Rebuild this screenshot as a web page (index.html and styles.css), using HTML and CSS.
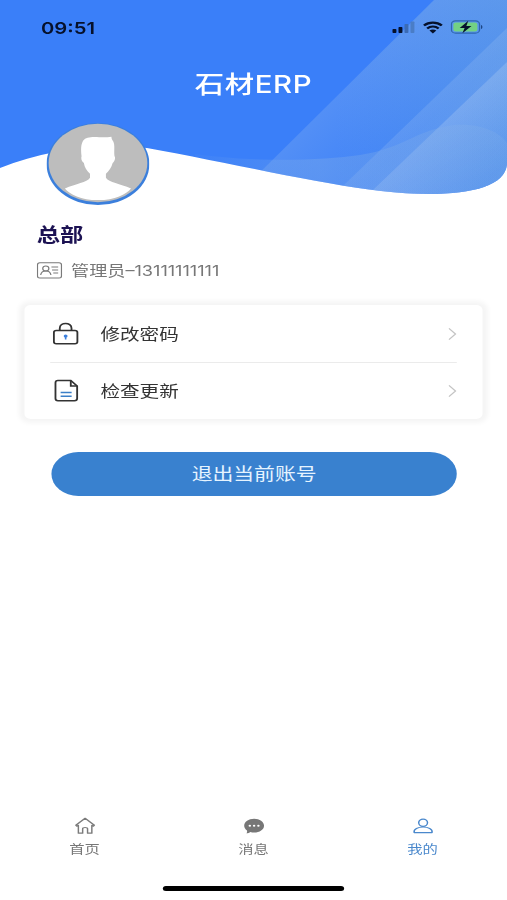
FILE: index.html
```html
<!DOCTYPE html>
<html lang="zh-CN">

<head>
  <meta charset="UTF-8" />
  <meta name="viewport" content="width=device-width, initial-scale=1" />
  <title>石材ERP</title>
  <link rel="stylesheet" href="styles.css">
</head>

<body>
  <div class="screen">

    <header class="hero">
      <svg class="hero-bg" viewBox="0 0 507 210" preserveAspectRatio="none">
        <defs>
          <clipPath id="wave">
            <path d="M0 0H507V164C506 175 498 182 484 187C461 195 423 196 381 191C320 184 225 162 147 148C95 143 45 150 0 168Z" />
          </clipPath>
          <linearGradient id="band1" gradientUnits="userSpaceOnUse" x1="348" y1="85" x2="405" y2="145">
            <stop offset="0" stop-color="#cfe0e6" stop-opacity=".17" />
            <stop offset="1" stop-color="#cfe0e6" stop-opacity=".03" />
          </linearGradient>
          <linearGradient id="band2" gradientUnits="userSpaceOnUse" x1="425" y1="106" x2="500" y2="181">
            <stop offset="0" stop-color="#dfeaf0" stop-opacity=".13" />
            <stop offset="1" stop-color="#dfeaf0" stop-opacity=".02" />
          </linearGradient>
          <linearGradient id="band3" gradientUnits="userSpaceOnUse" x1="441" y1="125" x2="490" y2="178">
            <stop offset="0" stop-color="#eaf0f3" stop-opacity=".18" />
            <stop offset="1" stop-color="#eaf0f3" stop-opacity="0" />
          </linearGradient>
          <linearGradient id="fade" x1="0" x2="1" y1="0" y2="0">
            <stop offset="0" stop-color="#89b3e6" stop-opacity=".05" />
            <stop offset=".4" stop-color="#89b3e6" stop-opacity=".3" />
            <stop offset="1" stop-color="#89b3e6" stop-opacity=".2" />
          </linearGradient>
          <linearGradient id="tint" x1="0" x2="1" y1="0" y2="0">
            <stop offset=".4" stop-color="#5594ea" stop-opacity="0" />
            <stop offset="1" stop-color="#5594ea" stop-opacity=".85" />
          </linearGradient>
        </defs>
        <g clip-path="url(#wave)">
          <rect width="507" height="210" fill="#3a7ff9" />
          <path d="M434 0H507V210H222Z" fill="url(#tint)" />
          <path d="M434 0H507V210H222Z" fill="url(#band1)" />
          <path d="M507 28V210H318Z" fill="url(#band2)" />
          <path d="M507 62V210H352Z" fill="url(#band3)" />
          <path d="M195 154C250 162 320 161 360 155C405 148 415 130 455 125C480 123 500 132 507 143V210H195Z" fill="url(#fade)" />
        </g>
      </svg>

      <div class="hero-content">
        <div class="status-bar">
          <span class="time">09:51</span>
          <div class="status-icons">
            <svg width="19" height="14" viewBox="0 0 19 14">
              <rect x="0.5" y="9" width="3.2" height="4" rx=".7" fill="#06112b" />
              <rect x="5.4" y="7" width="3.2" height="6" rx=".7" fill="#06112b" />
              <rect x="10.3" y="4" width="3.2" height="9" rx=".7" fill="#3b6bb5" />
              <rect x="15.2" y="1.5" width="3.2" height="11.5" rx=".7" fill="#4a7dc6" />
            </svg>
            <svg width="17" height="13" viewBox="0 0 17 13">
              <path d="M1.2 4.6C5.3.6 11.7.6 15.8 4.6M3.8 7.4C6.5 4.9 10.5 4.9 13.2 7.4" fill="none" stroke="#06112b" stroke-width="2.1" />
              <path d="M5.7 9.5C7.4 8 9.6 8 11.3 9.5L8.5 12.5Z" fill="#06112b" />
            </svg>
            <svg width="27" height="14" viewBox="0 0 27 14">
              <rect x=".6" y=".9" width="23" height="12.2" rx="3.4" fill="none" stroke="#2f66ae" stroke-width="1.1" />
              <rect x="2.2" y="2.5" width="19.6" height="9" rx="2" fill="#73d184" />
              <path d="M24.8 5V9C26.3 8.6 26.3 5.4 24.8 5Z" fill="#1d4684" />
              <path d="M14.4.8L7.4 7.9H11.4L9.6 13.2L17 5.9H12.8Z" fill="#06112b" />
            </svg>
          </div>
        </div>

        <h1 class="title">石材ERP</h1>

        <svg class="avatar" viewBox="0 0 84 84" preserveAspectRatio="none">
          <defs>
            <clipPath id="face">
              <circle cx="42" cy="41" r="39" />
            </clipPath>
          </defs>
          <circle cx="42" cy="42" r="42" fill="#3b7fdc" />
          <circle cx="42" cy="41" r="40.3" fill="#bdbdbd" />
          <path clip-path="url(#face)" d="M30 18C32 14 38 14 43 14.5C47 15 50 14.5 53 14C53 16 53.5 17 54.5 19C56 23 55 28 55.5 34C56.5 35 56 39 54 41C53 46 51 49 48.5 52V56C51 61 60 62 69 67C65 73 56 79 42 79C28 79 19 73 15 67C24 62 33 61 35.5 56V52C33 49 31 46 30.5 41C28.5 39 28 36 28.6 34C28 27 28 22 30 18Z" fill="#fff" />
        </svg>
      </div>
    </header>

    <section class="profile">
      <h2 class="company">总部</h2>
      <div class="account">
        <svg width="21" height="17" viewBox="0 0 21 17" fill="none" stroke="#7a7a7a" stroke-width="1">
          <rect x=".6" y=".7" width="19.6" height="15.4" rx="2" />
          <circle cx="7.4" cy="6.5" r="2.5" />
          <path d="M3.2 13C3.6 10.4 5.4 9.1 7.4 9.1S11.2 10.4 11.6 13M12 5H17.5M12.5 8H17.5M13.5 11H17.5" />
        </svg>
        <span>管理员–13111111111</span>
      </div>
    </section>

    <div class="card">
      <div class="row">
        <svg class="row-icon" width="22" height="26" viewBox="0 0 22 26" fill="none" stroke="#333" stroke-width="1.5">
          <rect x="1" y="9.6" width="19.2" height="13.2" rx="2" />
          <path d="M5.8 9.3V7.300C5.800.8 15.400.8 15.400 7.300V9.300" />
          <circle cx="10.600" cy="15" r="1.600" fill="#3b7fdc" stroke="none" />
          <path d="M10.600 15.300V18.600" stroke="#3b7fdc" stroke-width="1.300" />
        </svg>
        <span class="row-label">修改密码</span>
        <svg class="arrow" width="7" height="14" viewBox="0 0 7 14">
          <path d="M.6 1.300L6 7L.6 12.700" />
        </svg>
      </div>
      <div class="row">
        <svg class="row-icon" width="22" height="26" viewBox="0 0 22 26" fill="none" stroke="#333" stroke-width="1.500">
          <path d="M4.300 2.600H14.800L20 8.100V20.500Q20 22.700 17.800 22.700H4.300Q2.300 22.700 2.300 20.500V4.800Q2.300 2.600 4.300 2.600Z" />
          <path d="M14.800 2.800V8.100H20" />
          <path d="M6.500 14.500H15.500M6.500 18.200H15.500" stroke="#3b7fc8" />
        </svg>
        <span class="row-label">检查更新</span>
        <svg class="arrow" width="7" height="14" viewBox="0 0 7 14">
          <path d="M.6 1.300L6 7L.6 12.700" />
        </svg>
      </div>
    </div>

    <button class="logout">退出当前账号</button>

    <nav class="tabs">
      <div class="tab">
        <svg width="17" height="18" viewBox="0 0 17 18" fill="none" stroke="#7b7b7b" stroke-width="1.200" stroke-linejoin="round">
          <path d="M8.500 1.300L.9 8.200L1.700 9.200L3 8.300V16.200H6.500V11.700Q6.500 10.500 8.500 10.500T10.500 11.700V16.200H14V8.300L15.300 9.200L16.100 8.200Z" />
        </svg>
        <span>首页</span>
      </div>
      <div class="tab">
        <svg width="17" height="18" viewBox="0 0 17 18">
          <path d="M8.500 1.800C13 1.800 16.600 4.800 16.600 8.700S13 15.500 8.500 15.500C7.300 15.500 6.500 15.400 5.500 15C4.700 15.900 3.500 16.300 2.200 16.300C2.800 15.500 2.900 14.500 2.700 13.400C1.200 12.200.4 10.600.4 8.700C.4 4.800 4 1.800 8.500 1.800Z" fill="#777" />
          <circle cx="5" cy="8.800" r="1" fill="#fff" />
          <circle cx="8.500" cy="8.800" r="1" fill="#fff" />
          <circle cx="12" cy="8.800" r="1" fill="#fff" />
        </svg>
        <span>消息</span>
      </div>
      <div class="tab active">
        <svg width="17" height="18" viewBox="0 0 17 18" fill="none" stroke="#4a88cc" stroke-width="1.200">
          <circle cx="8.500" cy="5.700" r="3.600" />
          <path d="M1.200 15.600C.5 12 4.500 10 8.500 10S16.500 12 15.800 15.600Z" stroke-linejoin="round" />
        </svg>
        <span>我的</span>
      </div>
    </nav>

    <div class="home-indicator"></div>
  </div>
</body>

</html>
```
FILE: styles.css
```css
:root {
  --blue: #3981cf;
  --gray: #777;
}

* {
  box-sizing: border-box;
}

html,
body {
  margin: 0;
  padding: 0;
  height: 100%;
  overflow: hidden;
  background: #fff;
  font-family: Inter, "Noto Sans CJK SC", sans-serif;
}

svg {
  display: block;
  flex-shrink: 0;
}

.screen {
  width: 414px;
  height: 900px;
  display: flex;
  flex-direction: column;
  transform: scaleX(1.2246);
  transform-origin: 0 0;
}

.hero {
  display: grid;
  height: 210px;
}

.hero-bg,
.hero-content {
  grid-area: 1 / 1;
  width: 414px;
  height: 210px;
}

.hero-content {
  z-index: 1;
  display: flex;
  flex-direction: column;
}

.status-bar {
  height: 54px;
  padding: 0 19px 0 33.5px;
  display: flex;
  align-items: center;
  justify-content: space-between;
}

.time {
  padding-top: 1px;
  font-size: 16.5px;
  font-weight: 600;
  color: #06112b;
}

.status-icons {
  display: flex;
  align-items: center;
  gap: 6px;
}

.title {
  margin: 0;
  height: 60px;
  line-height: 62px;
  text-align: center;
  font-size: 24px;
  font-weight: 500;
  letter-spacing: 0.5px;
  color: #fff;
}

.avatar {
  width: 84px;
  height: 82px;
  margin: 9px 0 0 38px;
}

.profile {
  padding: 11px 30px 0;
}

.company {
  margin: 0;
  font-size: 19px;
  line-height: 30px;
  color: #1c1253;
}

.account {
  display: flex;
  align-items: center;
  gap: 7px;
  height: 24px;
  margin-top: 7px;
  font-size: 14.8px;
  color: var(--gray);
}

.account span {
  padding-bottom: 2px;
}

.card {
  margin: 23px 20px 0;
  height: 114px;
  padding: 0 21px;
  border-radius: 5px;
  background: #fff;
  box-shadow: 0 0 5px 4px #f5f5f5;
}

.row {
  height: 57px;
  display: flex;
  align-items: center;
}

.row + .row {
  border-top: 1px solid #ebebeb;
}

.row-icon {
  margin-left: 2px;
}

.row-label {
  flex: 1;
  margin-left: 17px;
  padding-bottom: 2px;
  font-size: 16px;
  color: #333;
}

.arrow {
  fill: none;
  stroke: #c4c4c4;
  stroke-width: 1.1;
}

.logout {
  height: 44px;
  margin: 33px 41px 0 42px;
  padding: 0 0 3px;
  border: none;
  border-radius: 22px;
  background: var(--blue);
  color: #e6f4ff;
  font-family: inherit;
  font-size: 17px;
}

.tabs {
  display: flex;
  height: 50px;
  margin-top: auto;
}

.tab {
  flex: 1;
  display: flex;
  flex-direction: column;
  align-items: center;
  gap: 5px;
  font-size: 12.5px;
  line-height: 20px;
  color: var(--gray);
}

.tab.active {
  color: #4a88cc;
}

.home-indicator {
  width: 148px;
  height: 5px;
  margin: 19px auto 9px;
  border-radius: 3px;
  background: #000;
}
```
